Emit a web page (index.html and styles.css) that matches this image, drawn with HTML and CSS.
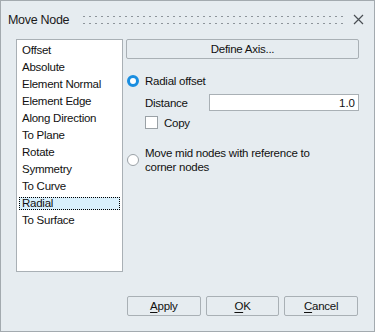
FILE: index.html
```html
<!DOCTYPE html>
<html lang="en">

<head>
    <meta charset="UTF-8">
    <meta name="viewport" content="width=device-width, initial-scale=1.0">
    <title>Move Node</title>
    <link rel="stylesheet" href="styles.css">
</head>

<body>
    <div class="dialog">
        <div class="titlebar">
            <span class="title">Move Node</span>
            <span class="grip"></span>
            <span class="close">
                <svg width="11" height="11" viewBox="0 0 11 11">
                    <path d="M1 1 L10 10 M10 1 L1 10" stroke="#4a4f54" stroke-width="1.2" fill="none" />
                </svg>
            </span>
        </div>

        <div class="content">
            <ul class="list">
                <li>Offset</li>
                <li>Absolute</li>
                <li>Element Normal</li>
                <li>Element Edge</li>
                <li>Along Direction</li>
                <li>To Plane</li>
                <li>Rotate</li>
                <li>Symmetry</li>
                <li>To Curve</li>
                <li class="selected">Radial</li>
                <li>To Surface</li>
            </ul>

            <div class="panel">
                <button class="btn wide">Define Axis...</button>

                <div class="option first">
                    <span class="radio checked"></span>
                    <span>Radial offset</span>
                </div>

                <div class="field">
                    <label>Distance</label>
                    <input type="text" value="1.0">
                </div>

                <div class="check-row">
                    <span class="checkbox"></span>
                    <span>Copy</span>
                </div>

                <div class="option second">
                    <span class="radio"></span>
                    <span>Move mid nodes with reference to<br>corner nodes</span>
                </div>
            </div>
        </div>

        <div class="footer">
            <button class="btn"><u>A</u>pply</button>
            <button class="btn"><u>O</u>K</button>
            <button class="btn"><u>C</u>ancel</button>
        </div>
    </div>
</body>

</html>
```

FILE: styles.css
```css
body {
    margin: 0;
    font-family: "Liberation Sans", Arial, sans-serif;
    font-size: 11.5px;
    letter-spacing: -0.25px;
    color: #111;
}

.dialog {
    width: 375px;
    height: 332px;
    box-sizing: border-box;
    border: 1px solid #a3aaaf;
    background-color: #e6ecf0;
    display: flex;
    flex-direction: column;
}

.titlebar {
    display: flex;
    align-items: center;
    height: 37px;
    padding: 0 10px 0 7px;
}

.title {
    font-size: 12.5px;
    letter-spacing: -0.3px;
    color: #1a1a1a;
}

.grip {
    flex: 1;
    height: 9px;
    margin: 0 9px 0 14px;
    background-image: radial-gradient(circle, #8d949a 0.9px, transparent 1.1px);
    background-size: 6px 7px;
    background-position: -2px -2px;
    background-repeat: repeat;
}

.close {
    display: flex;
    width: 11px;
    height: 11px;
}

.content {
    display: flex;
    gap: 3px;
    padding: 1px 15px 0 15px;
}

.list {
    list-style: none;
    margin: 0;
    padding: 2px 2px;
    width: 107px;
    height: 233px;
    box-sizing: border-box;
    background: white;
    border: 1px solid #a9b0b5;
}

.list li {
    height: 17px;
    line-height: 17px;
    padding-left: 3px;
    box-sizing: border-box;
    white-space: nowrap;
}

.list li.selected {
    height: 13px;
    margin: 2px 0;
    background-color: #d9f0fc;
    border: 1px dotted #000;
    line-height: 11px;
    padding-left: 2px;
}

.panel {
    flex: 1;
    display: flex;
    flex-direction: column;
}

.btn {
    font-family: inherit;
    font-size: 11.5px;
    letter-spacing: -0.25px;
    color: #111;
    background-color: #e6ecf0;
    border: 1px solid #a9b0b5;
    border-radius: 2px;
    height: 20px;
    padding: 0;
}

.btn.wide {
    width: 233px;
}

.btn u {
    text-decoration-thickness: 1px;
    text-underline-offset: 2px;
}

.option {
    display: flex;
    align-items: center;
    gap: 6px;
    padding-left: 1px;
}

.option.first {
    margin-top: 14px;
    height: 16px;
}

.option.second {
    margin-top: 17px;
    line-height: 14px;
}

.radio {
    width: 12px;
    height: 12px;
    box-sizing: border-box;
    border-radius: 50%;
    border: 1px solid #9aa1a6;
    background: white;
    flex-shrink: 0;
}

.radio.checked {
    border: 3px solid #1a8ee0;
    background: white;
}

.field {
    display: flex;
    align-items: center;
    margin-top: 5px;
    padding-left: 19px;
}

.field label {
    width: 64px;
}

.field input {
    width: 150px;
    height: 17px;
    box-sizing: border-box;
    border: 1px solid #a9b0b5;
    font-family: inherit;
    font-size: 11.5px;
    text-align: right;
    padding: 0 3px;
    color: #111;
}

.check-row {
    display: flex;
    align-items: center;
    gap: 6px;
    margin-top: 5px;
    padding-left: 19px;
}

.checkbox {
    width: 13px;
    height: 13px;
    box-sizing: border-box;
    border: 1px solid #9aa1a6;
    background: white;
}

.footer {
    display: flex;
    gap: 5px;
    margin-top: auto;
    padding: 0 16px 15px 126px;
}

.footer .btn {
    width: 74px;
}
```
